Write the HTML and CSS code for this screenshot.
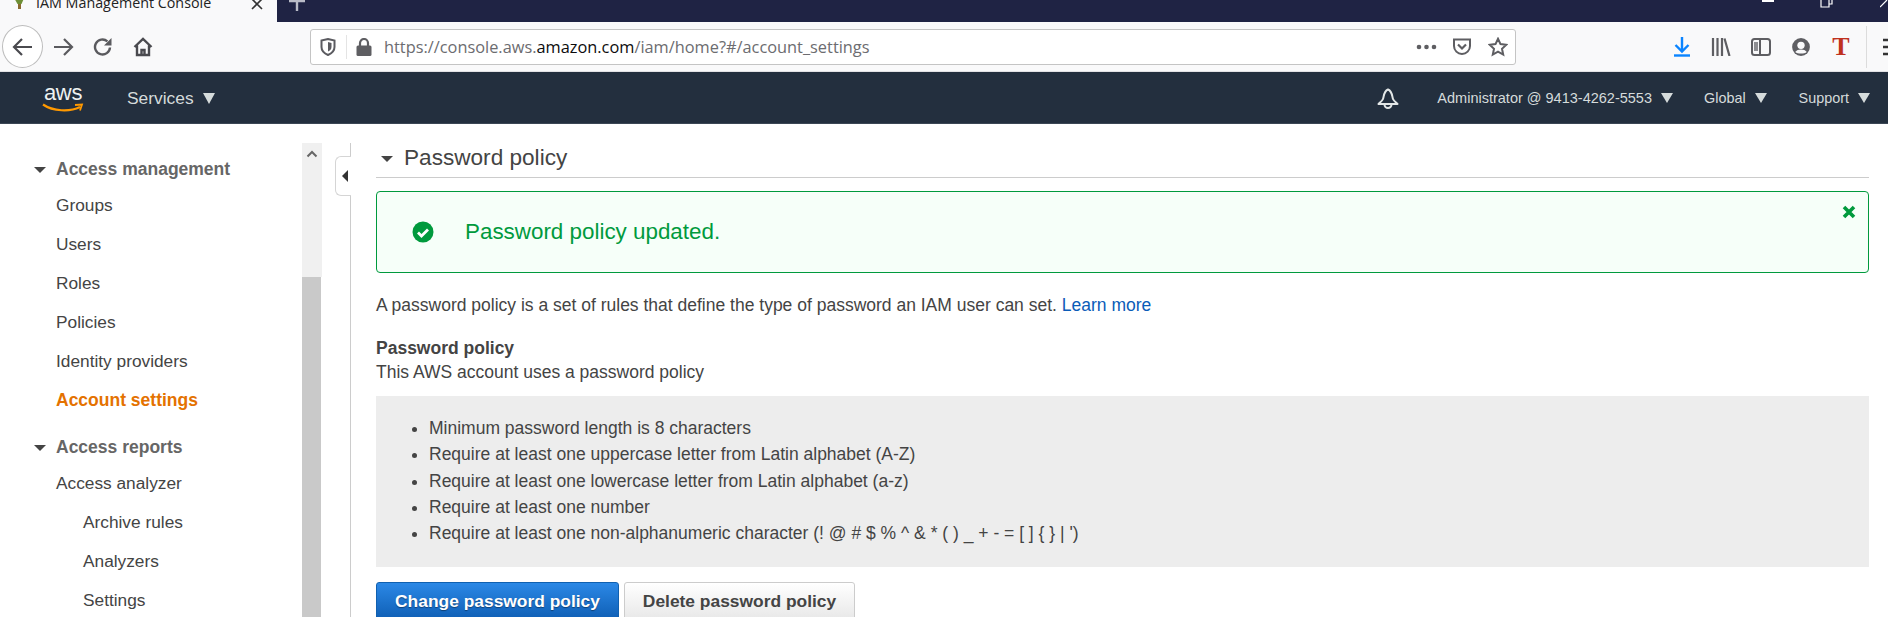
FILE: index.html
```html
<!DOCTYPE html>
<html lang="en">
<head>
<meta charset="utf-8">
<title>IAM Management Console</title>
<link rel="stylesheet" href="styles.css">
</head>
<body>
<div class="tabbar">
  <div class="tab">
    <svg class="favicon" width="14" height="13" viewBox="0 0 14 13"><path d="M1 0h12L9.500 8H9v5H6V8h-.5z" fill="#6d8f35"/><path d="M6 8h3v5H6z" fill="#8a6a2e"/></svg>
    <span class="tab-title">IAM Management Console</span>
    <svg class="tab-close" width="12" height="12" viewBox="0 0 12 12"><path d="M1 0l10 10M11 0L1 10" stroke="#333" stroke-width="1.6" fill="none"/></svg>
  </div>
  <svg class="tab-plus" width="18" height="12" viewBox="0 0 18 12"><path d="M9 0v11M1 1h16" stroke="#b9bbc7" stroke-width="2.4" fill="none"/></svg>
  <div class="win-btns">
    <span class="win-min"></span>
    <svg width="14" height="8" viewBox="0 0 14 8"><path d="M1 0v7h8V0M9 4h3V0" stroke="#fff" stroke-width="1.2" fill="none"/></svg>
    <svg width="8" height="8" viewBox="0 0 8 8"><path d="M0 7l7-7" stroke="#fff" stroke-width="1.2" fill="none"/></svg>
  </div>
</div>

<div class="toolbar">
  <div class="back-btn">
    <svg width="22" height="20" viewBox="0 0 22 20"><path d="M20 10H3M10 2l-8 8 8 8" stroke="#4a4a4f" stroke-width="2.2" fill="none"/></svg>
  </div>
  <svg class="tool tool-fwd" width="22" height="20" viewBox="0 0 22 20"><path d="M2 10h17M12 2l8 8-8 8" stroke="#5a5a5e" stroke-width="2.2" fill="none"/></svg>
  <svg class="tool tool-reload" width="20" height="20" viewBox="0 0 20 20"><path d="M17 10.500a7.500 7.500 0 1 1-2.600-6.200" stroke="#5a5a5e" stroke-width="2.400" fill="none"/><path d="M18.500 1v7.500H11z" fill="#5a5a5e"/></svg>
  <svg class="tool tool-home" width="20" height="20" viewBox="0 0 20 20"><path d="M1.500 10L10 2l8.500 8M4 8.500V18h12V8.500M8.500 18v-5h3v5" stroke="#4a4a4f" stroke-width="2.400" fill="none"/></svg>
  <div class="urlbar">
    <svg class="shield" width="16" height="18" viewBox="0 0 16 18"><path d="M1.500 2.500L8 1l6.500 1.500V9c0 4-3 6.500-6.500 8C4.500 15.500 1.500 13 1.500 9z" stroke="#5b5b60" stroke-width="2" fill="none"/><path d="M8 4l3.500 1v4c0 2-1.500 3.500-3.500 4.500z" fill="#5b5b60"/></svg>
    <span class="url-sep"></span>
    <svg class="lock" width="16" height="18" viewBox="0 0 16 18"><path d="M4 8V5a4 4 0 0 1 8 0v3" stroke="#5e5e62" stroke-width="2.200" fill="none"/><rect x="0.500" y="7.500" width="15" height="10.500" rx="1.500" fill="#5e5e62"/></svg>
    <div class="url-text">https://console.aws.<b class="url-host">amazon.com</b>/iam/home?#/account_settings</div>
    <div class="url-icons">
      <svg class="url-dots" width="22" height="6" viewBox="0 0 22 6"><circle cx="3" cy="3" r="2.300" fill="#5e5e62"/><circle cx="10.500" cy="3" r="2.300" fill="#5e5e62"/><circle cx="18" cy="3" r="2.300" fill="#5e5e62"/></svg>
      <svg width="20" height="18" viewBox="0 0 20 18"><path d="M2 1.500h16V8a8 8 0 0 1-16 0z" stroke="#5e5e62" stroke-width="2" fill="none"/><path d="M6 6.500l4 4 4-4" stroke="#5e5e62" stroke-width="2.200" fill="none"/></svg>
      <svg width="20" height="20" viewBox="0 0 20 20"><path d="M10 1.800l2.500 5.300 5.800.7-4.300 4 1.200 5.700-5.200-2.900-5.200 2.900 1.200-5.700-4.300-4 5.800-.7z" stroke="#5e5e62" stroke-width="2" fill="none"/></svg>
    </div>
  </div>
  <div class="tool-right">
    <svg width="18" height="22" viewBox="0 0 18 22"><path d="M9 1v14M2.500 9L9 15.500 15.500 9" stroke="#0a84ff" stroke-width="2.400" fill="none"/><path d="M1 19.500h16" stroke="#0a84ff" stroke-width="2.400"/></svg>
    <svg width="20" height="18" viewBox="0 0 20 18"><path d="M2 0v18M6.500 0v18M11 0v18M13.500.5l5 17.500" stroke="#5e5e62" stroke-width="2.200" fill="none"/></svg>
    <svg width="20" height="18" viewBox="0 0 20 18"><rect x="1" y="1" width="18" height="16" rx="2.500" stroke="#5e5e62" stroke-width="2" fill="none"/><path d="M9 1v16" stroke="#5e5e62" stroke-width="2"/><path d="M3 4h4v9H3z" fill="#8e8e92"/></svg>
    <svg width="20" height="20" viewBox="0 0 18 18"><circle cx="9" cy="9" r="8" fill="#5e5e62"/><circle cx="9" cy="7.500" r="3.300" fill="#f9f9fa"/><path d="M3.800 13.500c2-3 8.400-3 10.400 0C12 15.300 6 15.300 3.800 13.500z" fill="#f9f9fa"/></svg>
    <span class="t-ext">T</span>
    <span class="tool-sep"></span>
    <svg class="overflow" width="6" height="18" viewBox="0 0 6 18"><path d="M0 2h6M0 9h6M0 16h6" stroke="#333" stroke-width="2.600"/></svg>
  </div>
</div>

<nav class="awsnav">
  <div class="aws-logo">
    <span class="aws-word">aws</span>
    <svg class="aws-smile" width="42" height="10" viewBox="0 0 42 10"><path d="M1 1.500C11 8.500 28 9 38 4" stroke="#f90" stroke-width="2.200" fill="none"/><path d="M33 2l7-.5-2 6" stroke="#f90" stroke-width="1.800" fill="none"/></svg>
  </div>
  <span class="nav-services">Services</span><span class="caret caret-lg"></span>
  <div class="nav-right">
    <svg class="bell" width="24" height="22" viewBox="0 0 24 22"><path d="M12 1.500c-4.500 2-4 7-5 9.500-.7 1.800-3 3.500-4.500 5h19c-1.500-1.500-3.800-3.200-4.500-5-1-2.500-.5-7.500-5-9.500z" stroke="#e3e7e7" stroke-width="2" fill="none" stroke-linejoin="round"/><path d="M8.500 16.500a3.500 3.500 0 0 0 7 0" stroke="#e3e7e7" stroke-width="2" fill="none"/></svg>
    <span class="nav-item nav-admin">Administrator @ 9413-4262-5553</span><span class="caret"></span>
    <span class="nav-item nav-global">Global</span><span class="caret"></span>
    <span class="nav-item nav-support">Support</span><span class="caret"></span>
  </div>
</nav>

<div class="shell">
  <aside class="sidebar">
    <h3 class="side-head"><span class="tri"></span>Access management</h3>
    <a class="side-link">Groups</a>
    <a class="side-link">Users</a>
    <a class="side-link">Roles</a>
    <a class="side-link">Policies</a>
    <a class="side-link">Identity providers</a>
    <a class="side-link side-active">Account settings</a>
    <h3 class="side-head side-head-2"><span class="tri"></span>Access reports</h3>
    <a class="side-link">Access analyzer</a>
    <a class="side-link side-sub">Archive rules</a>
    <a class="side-link side-sub">Analyzers</a>
    <a class="side-link side-sub">Settings</a>
  </aside>
  <div class="scrollbar">
    <div class="scroll-track">
      <svg width="12" height="8" viewBox="0 0 12 8"><path d="M1.500 6.500L6 2l4.500 4.500" stroke="#666" stroke-width="2" fill="none"/></svg>
    </div>
    <div class="scroll-thumb"></div>
  </div>
  <div class="divider">
    <div class="collapse"><span class="collapse-tri"></span></div>
  </div>
  <main class="content">
    <h2 class="section-title"><span class="tri"></span>Password policy</h2>
    <div class="alert">
      <svg class="alert-check" width="22" height="22" viewBox="0 0 22 22"><circle cx="11" cy="11" r="10.500" fill="#009a3d"/><path d="M6 11.500l3.500 3.500 6.500-6.500" stroke="#fff" stroke-width="2.800" fill="none"/></svg>
      <span class="alert-text">Password policy updated.</span>
      <svg class="alert-close" width="14" height="14" viewBox="0 0 14 14"><path d="M2 2l10 10M12 2L2 12" stroke="#009a3d" stroke-width="3.600" fill="none"/></svg>
    </div>
    <p class="intro">A password policy is a set of rules that define the type of password an IAM user can set. <a class="link">Learn more</a></p>
    <p class="policy-head">Password policy</p>
    <p class="policy-sub">This AWS account uses a password policy</p>
    <div class="policy-box">
      <ul class="policy-list">
        <li>Minimum password length is 8 characters</li>
        <li>Require at least one uppercase letter from Latin alphabet (A-Z)</li>
        <li>Require at least one lowercase letter from Latin alphabet (a-z)</li>
        <li>Require at least one number</li>
        <li>Require at least one non-alphanumeric character (! @ # $ % ^ &amp; * ( ) _ + - = [ ] { } | ')</li>
      </ul>
    </div>
    <div class="actions">
      <button class="btn btn-primary">Change password policy</button>
      <button class="btn btn-default">Delete password policy</button>
    </div>
  </main>
</div>
</body>
</html>
```
FILE: styles.css
```css
* { box-sizing: border-box; }
html, body { margin: 0; height: 617px; overflow: hidden; background: #fff; }
body { font-family: "Liberation Sans", Arial, sans-serif; font-size: 17.500px; color: #444; }

.tabbar { height: 22px; background: #1f2344; display: flex; align-items: flex-start; overflow: hidden; }
.tab { width: 277px; height: 22px; background: #f9f9fa; display: flex; align-items: center; flex: none; position: relative; }
.favicon { margin: -18px 0 0 12px; flex: none; }
.tab-title { margin: -17px 0 0 10px; font-size: 14.300px; color: #222; white-space: nowrap; font-family: "Open Sans", sans-serif; }
.tab-close { margin: -12px 0 0 40px; flex: none; }
.tab-plus { margin: 0 0 0 11px; flex: none; }
.win-btns { margin-left: auto; display: flex; align-items: flex-start; gap: 46px; padding-right: 0; }
.win-min { width: 12px; height: 2px; background: #fff; }

.toolbar { height: 50px; background: #f9f9fa; display: flex; align-items: center; border-bottom: 1px solid #e2e2e4; padding-left: 2px; }
.back-btn { width: 41px; height: 43px; border-radius: 50%; border: 1px solid #bdbdbd; background: #fff; display: flex; align-items: center; justify-content: center; flex: none; }
.tool { flex: none; }
.tool-fwd { margin-left: 9px; }
.tool-reload { margin-left: 19px; }
.tool-home { margin-left: 20px; }
.urlbar { margin: 1px 0 0 157px; width: 1206px; height: 36px; background: #fff; border: 1px solid #c4c4c4; border-radius: 3px; display: flex; align-items: center; flex: none; }
.shield { margin-left: 9px; flex: none; }
.url-sep { width: 1px; height: 24px; background: #e4e4e4; margin-left: 10px; flex: none; }
.lock { margin-left: 9px; flex: none; }
.url-text { margin-left: 12px; font-family: "Open Sans", sans-serif; font-size: 16.350px; color: #6c6c70; white-space: nowrap; }
.url-host { font-weight: 400; color: #0c0c0d; }
.url-icons { margin-left: auto; padding-right: 7px; display: flex; align-items: center; gap: 16px; }
.url-dots { margin-right: -2px; }
.tool-right { flex: 1; display: flex; align-items: center; padding-left: 157px; gap: 20px; }
.t-ext { font-family: "Liberation Serif", serif; font-weight: 700; font-size: 26px; color: #c0321e; line-height: 1; width: 20px; text-align: center; }
.tool-sep { width: 1px; height: 42px; background: #dcdcdc; margin-left: -5px; flex: none; }
.overflow { margin-left: -4px; flex: none; }

.awsnav { height: 52px; padding-top: 1px; background: #232f3e; display: flex; align-items: center; border-bottom: 1px solid #3b4654; color: #d5dbdb; }
.aws-logo { margin-left: 42px; width: 42px; display: flex; flex-direction: column; align-items: center; flex: none; }
.aws-word { font-size: 22px; line-height: 18px; color: #eef1f1; letter-spacing: -0.3px; }
.aws-smile { margin-top: 1px; }
.nav-services { margin-left: 43px; font-size: 17.400px; }
.caret { display: inline-block; width: 0; height: 0; border-left: 6px solid transparent; border-right: 6px solid transparent; border-top: 10px solid #d5dbdb; margin-left: 9px; flex: none; }
.caret-lg { margin-left: 9px; border-left-width: 6.500px; border-right-width: 6.500px; border-top-width: 11px; }
.nav-right { margin-left: auto; display: flex; align-items: center; padding-right: 18px; }
.bell { margin: 2px 37px 0 0; flex: none; }
.nav-item { font-size: 14.400px; white-space: nowrap; }
.nav-admin { font-size: 14.500px; }
.nav-global { margin-left: 31px; }
.nav-support { margin-left: 32px; }

.shell { display: flex; height: 493px; overflow: hidden; }
.sidebar { width: 302px; padding-top: 33px; flex: none; }
.side-head { margin: 0; font-size: 17.500px; line-height: 24px; font-weight: 700; color: #666; display: flex; align-items: center; padding-left: 34px; height: 24px; }
.tri { width: 0; height: 0; border-left: 6px solid transparent; border-right: 6px solid transparent; border-top: 6px solid #444; margin-right: 10px; flex: none; position: relative; top: 1px; }
.side-head-2 { margin-top: 15px; }
.side-link { display: block; height: 39px; line-height: 39px; padding-left: 56px; color: #444; font-size: 17.300px; }
.side-head + .side-link { margin-top: 5px; }
.side-head-2 + .side-link { margin-top: 5px; }
.side-active { color: #e47200; font-weight: 700; font-size: 17.500px; }
.side-sub { padding-left: 83px; }

.scrollbar { width: 20px; flex: none; display: flex; flex-direction: column; margin-top: 19px; }
.scroll-track { height: 134px; background: #f0f0f0; display: flex; justify-content: center; padding-top: 7px; }
.scroll-thumb { flex: 1; background: #c9c9c9; margin-right: 1px; }

.divider { width: 29px; flex: none; margin-top: 19px; border-right: 1px solid #ccc; padding-top: 13px; display: flex; justify-content: flex-end; }
.collapse { width: 16px; height: 40px; border: 1px solid #d5d5d5; border-right: 0; border-radius: 6px 0 0 6px; background: #fff; display: flex; align-items: center; justify-content: center; margin-right: -1px; }
.collapse-tri { width: 0; height: 0; border-top: 6px solid transparent; border-bottom: 6px solid transparent; border-right: 6px solid #333; margin-left: 3px; }

.content { flex: 1; min-width: 0; padding: 17px 19px 0 25px; }
.section-title { margin: 0; height: 37px; border-bottom: 1px solid #ccc; font-size: 22.600px; line-height: 32px; font-weight: 400; color: #444; display: flex; align-items: center; padding-left: 5px; padding-bottom: 3px; }
.section-title .tri { margin-right: 11px; }
.alert { margin-top: 13px; height: 82px; border: 1px solid #009a3d; border-radius: 4px; background: #f6fff9; display: flex; align-items: center; position: relative; }
.alert-check { margin-left: 35px; flex: none; }
.alert-text { margin-left: 31px; font-size: 22.400px; color: #009a3d; }
.alert-close { position: absolute; top: 13px; right: 12px; }
.intro { margin: 20px 0 0; line-height: 24px; color: #444; }
.link { color: #0a5cb8; }
.policy-head { margin: 19px 0 0; line-height: 24px; font-weight: 700; color: #444; }
.policy-sub { margin: 0; line-height: 25px; }
.policy-box { margin-top: 11px; height: 171px; background: #ededed; padding: 19px 0 0 53px; }
.policy-list { margin: 0; padding: 0; list-style: disc; }
.policy-list li { line-height: 26.250px; }
.actions { margin-top: 15px; display: flex; gap: 5px; }
.btn { height: 38px; border-radius: 3px; font-family: inherit; font-size: 17.400px; font-weight: 700; padding: 0; flex: none; }
.btn-primary { width: 243px; color: #fff; border: 1px solid #1060b0; background: linear-gradient(#2b88e6, #0f5fb5); text-shadow: 0 1px 1px rgba(0,0,0,.4); }
.btn-default { width: 231px; color: #444; border: 1px solid #ccc; background: linear-gradient(#fff, #e8e8e8); }
```
